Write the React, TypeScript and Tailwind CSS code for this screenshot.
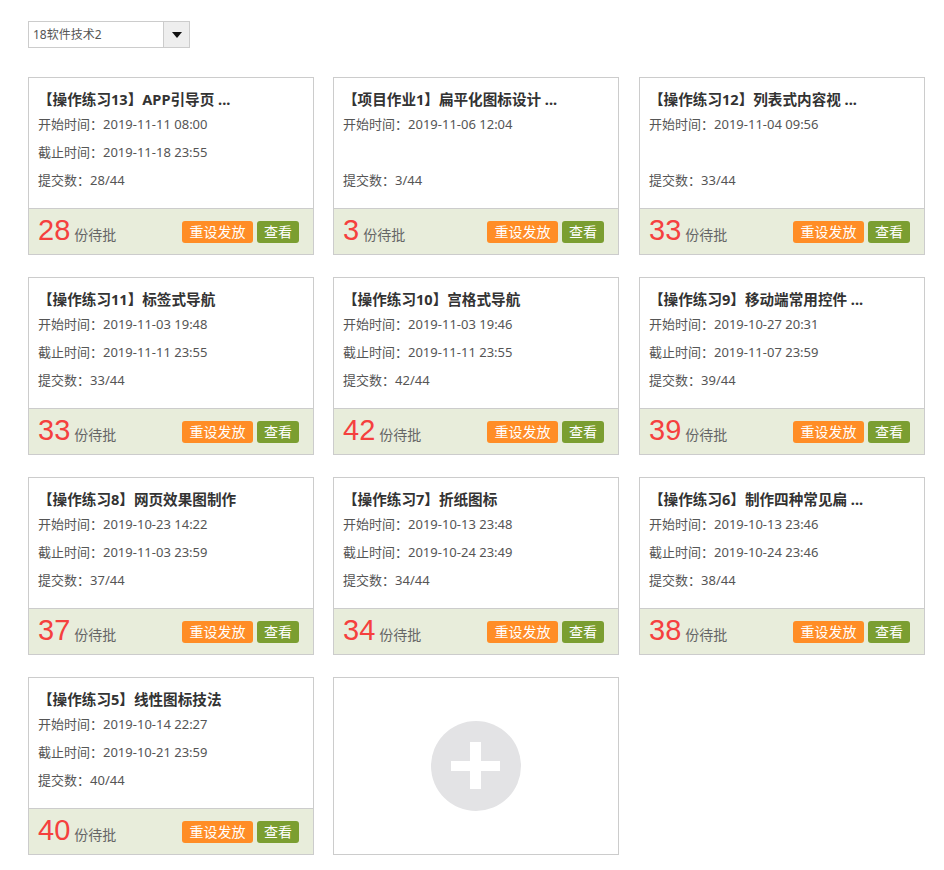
import React from "react";

type Task = {
  title: string;
  start: string;
  end?: string;
  submit: string;
  pending: number;
};

const tasks: Task[] = [
  { title: "【操作练习13】APP引导页 ...", start: "2019-11-11 08:00", end: "2019-11-18 23:55", submit: "28/44", pending: 28 },
  { title: "【项目作业1】扁平化图标设计 ...", start: "2019-11-06 12:04", submit: "3/44", pending: 3 },
  { title: "【操作练习12】列表式内容视 ...", start: "2019-11-04 09:56", submit: "33/44", pending: 33 },
  { title: "【操作练习11】标签式导航", start: "2019-11-03 19:48", end: "2019-11-11 23:55", submit: "33/44", pending: 33 },
  { title: "【操作练习10】宫格式导航", start: "2019-11-03 19:46", end: "2019-11-11 23:55", submit: "42/44", pending: 42 },
  { title: "【操作练习9】移动端常用控件 ...", start: "2019-10-27 20:31", end: "2019-11-07 23:59", submit: "39/44", pending: 39 },
  { title: "【操作练习8】网页效果图制作", start: "2019-10-23 14:22", end: "2019-11-03 23:59", submit: "37/44", pending: 37 },
  { title: "【操作练习7】折纸图标", start: "2019-10-13 23:48", end: "2019-10-24 23:49", submit: "34/44", pending: 34 },
  { title: "【操作练习6】制作四种常见扁 ...", start: "2019-10-13 23:46", end: "2019-10-24 23:46", submit: "38/44", pending: 38 },
  { title: "【操作练习5】线性图标技法", start: "2019-10-14 22:27", end: "2019-10-21 23:59", submit: "40/44", pending: 40 },
];

function Card({ t }: { t: Task }) {
  return (
    <div className="w-[286px] border border-[#cccccc] bg-white flex flex-col h-[178px]">
      <div className="h-[130px] pl-[9px] pt-[10px]">
        <div className="h-[22px] leading-[22px] text-[14.6px] font-bold text-[#333333] whitespace-nowrap">
          {t.title}
        </div>
        <div className="h-[28px] leading-[28px] text-[13px] text-[#555555]">开始时间：{t.start}</div>
        <div className="h-[28px] leading-[28px] text-[13px] text-[#555555]">{t.end ? `截止时间：${t.end}` : ""}</div>
        <div className="h-[28px] leading-[28px] text-[13px] text-[#555555]">提交数：{t.submit}</div>
      </div>
      <div className="border-t border-[#cccccc] bg-[#e8eddb] flex-1 flex items-center pl-[9px] pr-[14px]">
        <div className="flex items-baseline mb-[4px]">
          <span className="text-[29px] leading-[30px] text-[#f5403e] font-['Liberation_Sans',Arial,sans-serif]">
            {t.pending}
          </span>
          <span className="ml-[4px] text-[14px] text-[#666666]">份待批</span>
        </div>
        <div className="ml-auto flex gap-[4px]">
          <button className="w-[71px] h-[22px] rounded-[3px] bg-[#ff8d26] text-white text-[14px] leading-[22px]">
            重设发放
          </button>
          <button className="w-[42px] h-[22px] rounded-[3px] bg-[#7b9e31] text-white text-[14px] leading-[22px]">
            查看
          </button>
        </div>
      </div>
    </div>
  );
}

function AddCard() {
  return (
    <div className="w-[286px] border border-[#cccccc] bg-white h-[178px] flex items-center justify-center">
      <div className="w-[90px] h-[90px] rounded-full bg-[#e3e3e5] relative">
        <div className="absolute left-[20px] top-[40px] w-[49px] h-[10px] bg-white" />
        <div className="absolute left-[39px] top-[21px] w-[11px] h-[47px] bg-white" />
      </div>
    </div>
  );
}

export default function App() {
  return (
    <div
      className="w-[944px] min-h-[870px] bg-white pl-[28px] pt-[21px]"
      style={{ fontFamily: '"Microsoft YaHei", "Noto Sans", "Noto Sans CJK SC", sans-serif' }}
    >
      <div className="w-[162px] h-[27px] border border-[#cccccc] flex items-stretch">
        <div className="flex-1 pl-[4px] text-[12px] leading-[25px] text-[#555555]">18软件技术2</div>
        <div className="w-[26px] border-l border-[#cccccc] bg-[#eeeeee] flex items-center justify-center">
          <svg width="10" height="6" viewBox="0 0 10 6">
            <path d="M0 0 L10 0 L5 6 Z" fill="#111" />
          </svg>
        </div>
      </div>
      <div className="mt-[29px] grid grid-cols-[305px_306px_286px] gap-y-[22px] pb-[14px]">
        {tasks.map((t, i) => (
          <Card key={i} t={t} />
        ))}
        <AddCard />
      </div>
    </div>
  );
}
